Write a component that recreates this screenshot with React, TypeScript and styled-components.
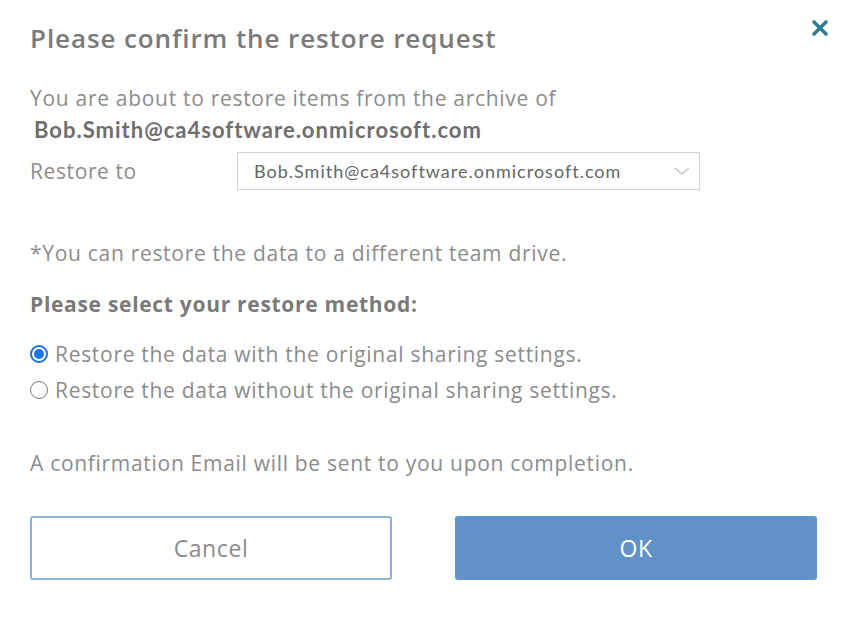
import React, { useState } from 'react';
import styled, { createGlobalStyle } from 'styled-components';

const GlobalStyle = createGlobalStyle`
  html, body {
    margin: 0;
    padding: 0;
    background: #ffffff;
  }
  body {
    font-family: 'Open Sans', 'Liberation Sans', sans-serif;
  }
`;

const Dialog = styled.div`
  position: relative;
  width: 846px;
  height: 626px;
  box-sizing: border-box;
  padding: 22px 29px 0 30px;
  background: #ffffff;
  color: #8c8c8c;
`;

const Title = styled.h2`
  margin: 0;
  font-size: 26px;
  letter-spacing: 0.9px;
  line-height: 32px;
  font-weight: 600;
  color: #7a7a7a;
`;

const CloseButton = styled.button`
  position: absolute;
  top: 18px;
  right: 16px;
  width: 20px;
  height: 20px;
  padding: 0;
  border: none;
  background: none;
  cursor: pointer;
  display: flex;
  align-items: center;
  justify-content: center;
`;

const Text = styled.p<{ $top: number }>`
  margin: ${({ $top }) => $top}px 0 0;
  font-size: 21px;
  letter-spacing: 0.7px;
  line-height: 28px;
  color: #8c8c8c;
`;

const Email = styled.div`
  margin: 2px 0 0 4px;
  font-family: 'Lato', 'Liberation Sans', sans-serif;
  font-weight: 700;
  font-size: 22px;
  letter-spacing: 1px;
  line-height: 32px;
  color: #6e6e6e;
`;

const Row = styled.div`
  display: flex;
  align-items: center;
  margin-top: 6px;
`;

const Label = styled.span`
  width: 207px;
  font-size: 21px;
  letter-spacing: 0.6px;
  line-height: 28px;
  color: #8c8c8c;
`;

const Select = styled.div`
  width: 463px;
  height: 38px;
  box-sizing: border-box;
  border: 1.5px solid #cbd3de;
  display: flex;
  align-items: center;
  justify-content: space-between;
  padding: 0 8px 0 16px;
  font-family: 'Lato', 'Liberation Sans', sans-serif;
  font-size: 18px;
  letter-spacing: 1px;
  color: #666666;
`;

const Heading = styled.h3`
  margin: 23px 0 0;
  font-size: 21px;
  letter-spacing: 0.7px;
  line-height: 28px;
  font-weight: 700;
  color: #7a7a7a;
`;

const Options = styled.div`
  margin-top: 18px;
  display: flex;
  flex-direction: column;
`;

const Option = styled.label`
  display: flex;
  align-items: center;
  gap: 7px;
  height: 36px;
  font-size: 21px;
  letter-spacing: 0.7px;
  color: #8c8c8c;
  cursor: pointer;
`;

const RadioDot = styled.span<{ $checked: boolean }>`
  width: 18px;
  height: 18px;
  box-sizing: border-box;
  border-radius: 50%;
  border: ${({ $checked }) => ($checked ? '2px solid #1a73e8' : '1.5px solid #7a7a7a')};
  display: flex;
  align-items: center;
  justify-content: center;
  flex-shrink: 0;

  &::after {
    content: '';
    width: 10px;
    height: 10px;
    border-radius: 50%;
    background: ${({ $checked }) => ($checked ? '#1a73e8' : 'transparent')};
  }
`;

const Buttons = styled.div`
  margin-top: 39px;
  display: flex;
  justify-content: space-between;
`;

const Button = styled.button<{ $primary?: boolean }>`
  width: 362px;
  height: 64px;
  box-sizing: border-box;
  border-radius: 3px;
  font-family: 'Open Sans', 'Liberation Sans', sans-serif;
  font-size: 23px;
  letter-spacing: 0.6px;
  cursor: pointer;
  border: 2px solid ${({ $primary }) => ($primary ? '#6191c9' : '#8fb2df')};
  background: ${({ $primary }) => ($primary ? '#6191c9' : '#ffffff')};
  color: ${({ $primary }) => ($primary ? '#ffffff' : '#8c8c8c')};
`;

const account = 'Bob.Smith@ca4software.onmicrosoft.com';

export default function App() {
  const [method, setMethod] = useState<'with' | 'without'>('with');

  return (
    <>
      <GlobalStyle />
      <Dialog>
        <Title>Please confirm the restore request</Title>
        <CloseButton aria-label="Close">
          <svg width="18" height="18" viewBox="0 0 18 18">
            <path d="M3 3 L15 15 M15 3 L3 15" stroke="#2e7d93" strokeWidth="3.6" strokeLinecap="round" />
          </svg>
        </CloseButton>

        <Text $top={30}>You are about to restore items from the archive of</Text>
        <Email>{account}</Email>

        <Row>
          <Label>Restore to</Label>
          <Select>
            <span>{account}</span>
            <svg width="18" height="10" viewBox="0 0 18 10">
              <path d="M2 2 L9 8 L16 2" fill="none" stroke="#c4c9d0" strokeWidth="1.6" />
            </svg>
          </Select>
        </Row>

        <Text $top={49}>*You can restore the data to a different team drive.</Text>
        <Heading>Please select your restore method:</Heading>

        <Options>
          <Option onClick={() => setMethod('with')}>
            <RadioDot $checked={method === 'with'} />
            Restore the data with the original sharing settings.
          </Option>
          <Option onClick={() => setMethod('without')}>
            <RadioDot $checked={method === 'without'} />
            Restore the data without the original sharing settings.
          </Option>
        </Options>

        <Text $top={41}>A confirmation Email will be sent to you upon completion.</Text>

        <Buttons>
          <Button>Cancel</Button>
          <Button $primary>OK</Button>
        </Buttons>
      </Dialog>
    </>
  );
}
